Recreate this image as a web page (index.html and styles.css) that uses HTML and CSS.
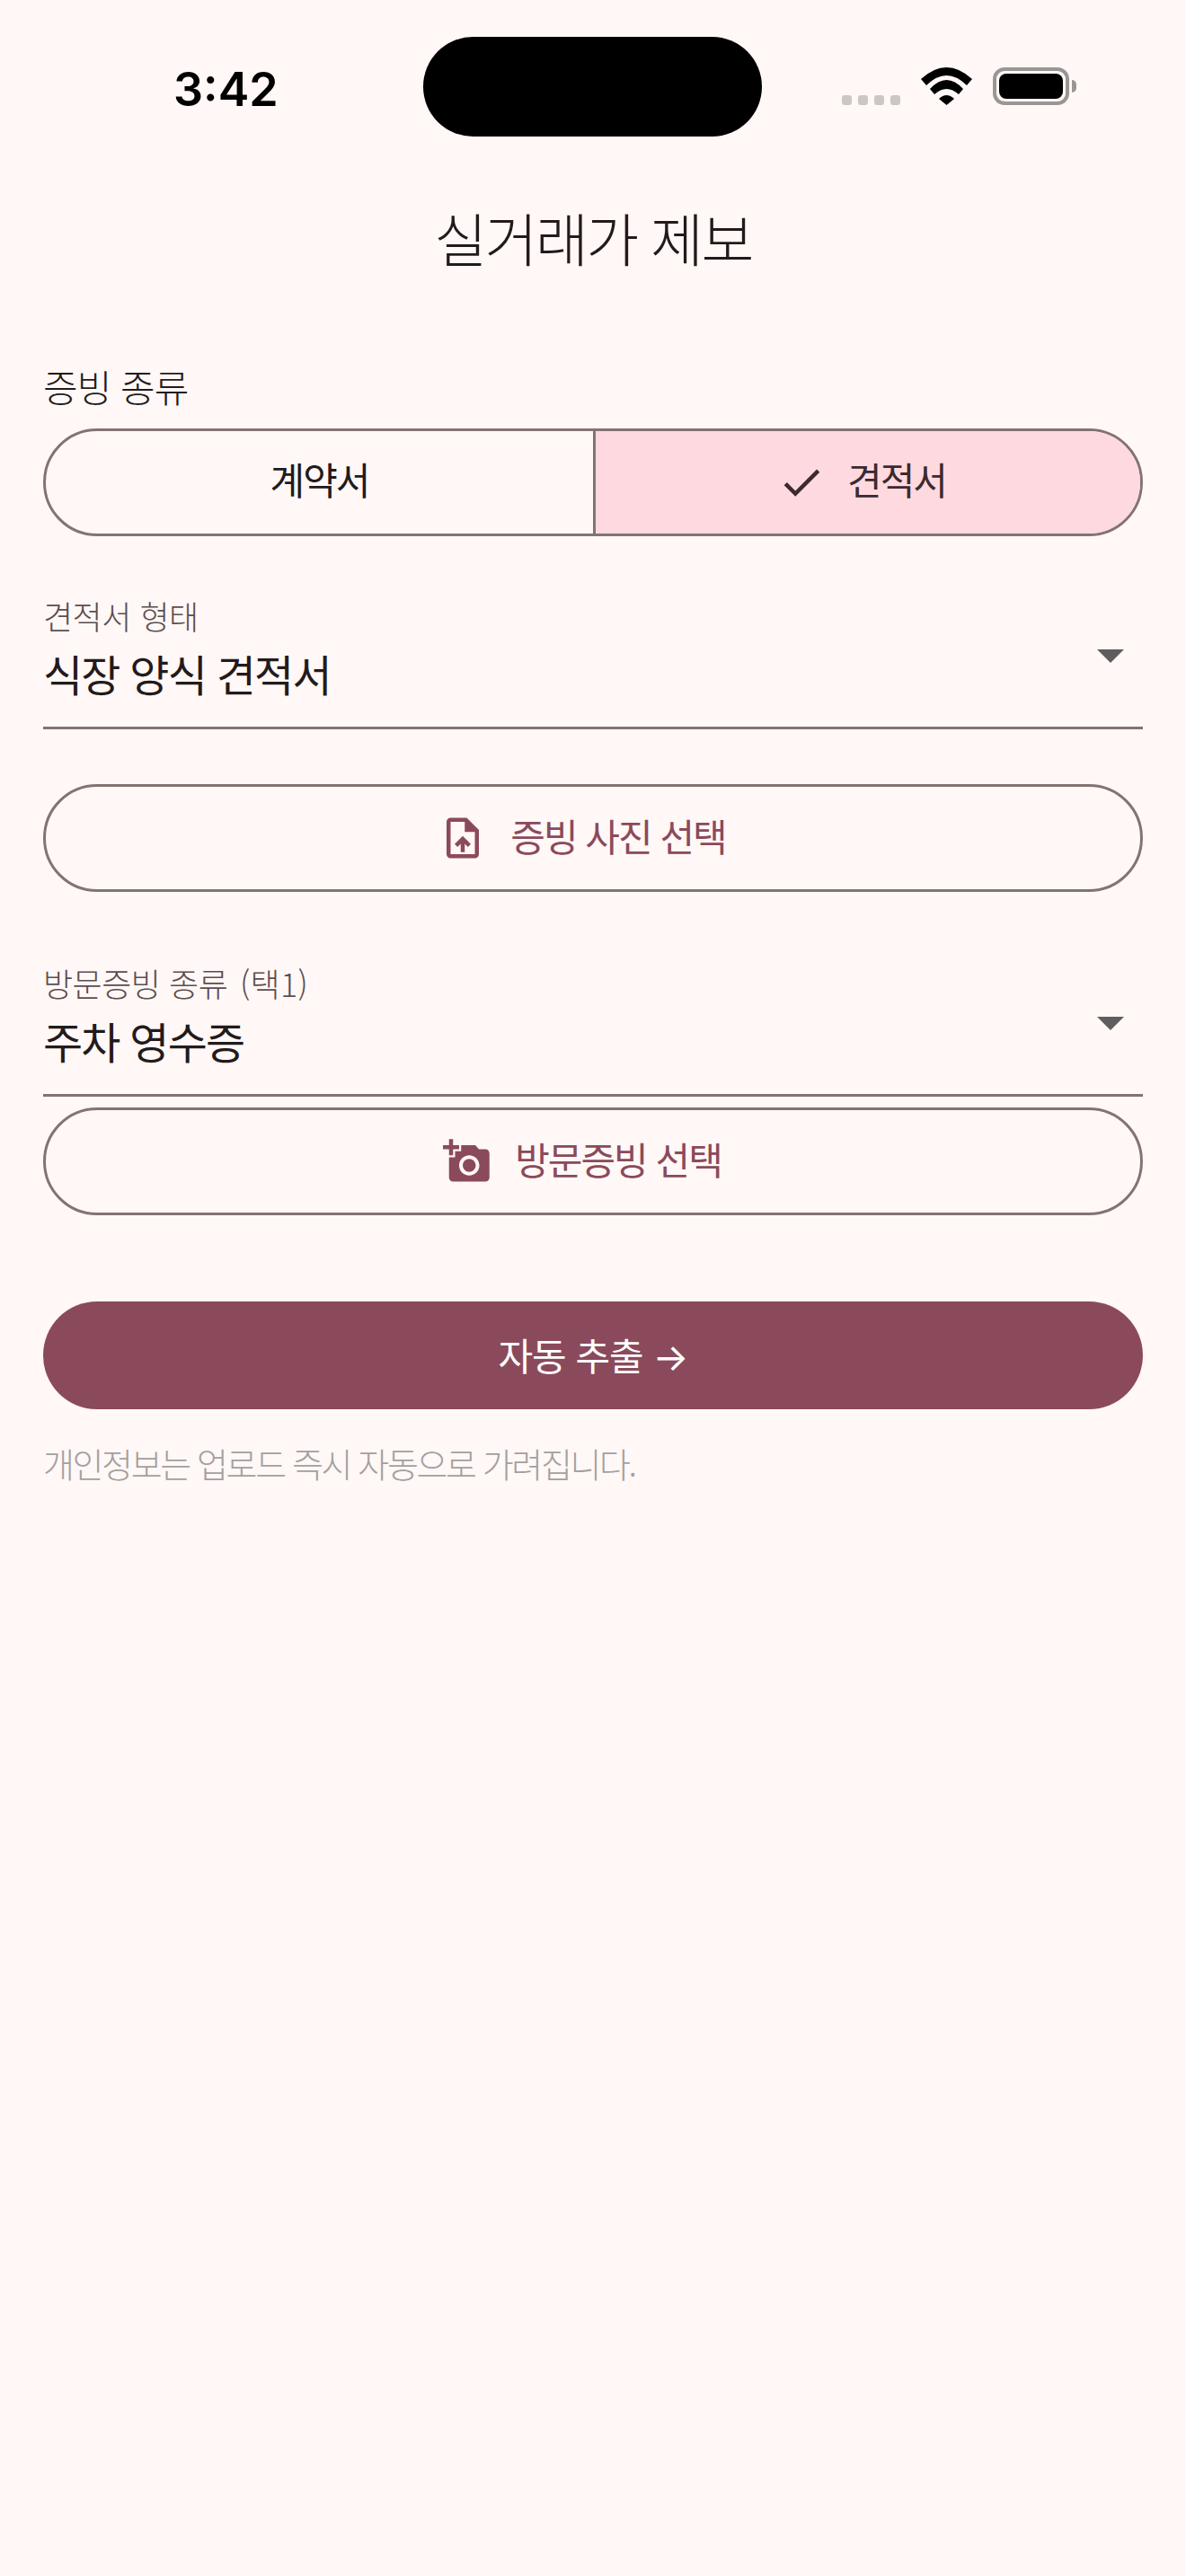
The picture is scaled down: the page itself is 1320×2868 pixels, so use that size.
FILE: index.html
```html
<!DOCTYPE html>
<html lang="ko">
<head>
<meta charset="utf-8">
<title>실거래가 제보</title>
<link rel="stylesheet" href="styles.css">
</head>
<body>
<div class="status-bar">
  <span class="time">3:42</span>
  <div class="island"></div>
  <div class="status-icons">
    <div class="signal"><i></i><i></i><i></i><i></i></div>
    <svg class="wifi" viewBox="0 0 57 42"><path d="M0 13Q28.5-13 57 13L51 20Q28.5-2 6 20Z"/><path d="M10 24Q28.5 4 47 24L42 30Q28.5 18 15 30Z"/><path d="M20 35Q28.5 27 37 35L28.5 42Z"/></svg>
    <div class="battery"><div class="battery-fill"></div></div>
    <div class="battery-nub"></div>
  </div>
</div>
<main class="page">
  <h1 class="title">실거래가 제보</h1>
  <div class="section-label">증빙 종류</div>
  <div class="segmented">
    <div class="segment"><span class="lift">계약서</span></div>
    <div class="segment selected">
      <svg class="icon check" viewBox="0 0 24 24"><path d="M9 16.17L4.83 12l-1.42 1.41L9 19 21 7l-1.41-1.41z"/></svg>
      <span class="lift">견적서</span>
    </div>
  </div>
  <div class="field first-field">
    <div class="field-label">견적서 형태</div>
    <div class="field-value">식장 양식 견적서</div>
    <div class="caret"></div>
  </div>
  <button class="outline-btn upload-btn">
    <svg class="icon" viewBox="0 0 24 24"><path d="M14 2H6c-1.1 0-1.99.9-1.99 2L4 20c0 1.1.89 2 1.99 2H18c1.1 0 2-.9 2-2V8l-6-6zm4 18H6V4h7v5h5v11zM8 15.01l1.41 1.41L11 14.84V19h2v-4.16l1.59 1.59L16 15.01 12.01 11 8 15.01z"/></svg>
    <span class="lift">증빙 사진 선택</span>
  </button>
  <div class="field second-field">
    <div class="field-label">방문증빙 종류 <span class="paren">(택1)</span></div>
    <div class="field-value">주차 영수증</div>
    <div class="caret"></div>
  </div>
  <button class="outline-btn visit-btn">
    <svg class="icon" viewBox="0 0 24 24"><path d="M3 4V1h2v3h3v2H5v3H3V6H0V4h3zm3 6V7h3V4h7l1.83 2H21c1.1 0 2 .9 2 2v12c0 1.1-.9 2-2 2H5c-1.1 0-2-.9-2-2V10h3zm7 9c2.76 0 5-2.24 5-5s-2.24-5-5-5-5 2.24-5 5 2.24 5 5 5zm-3.2-5c0 1.77 1.43 3.2 3.2 3.2s3.2-1.43 3.2-3.2-1.43-3.2-3.2-3.2-3.2 1.43-3.2 3.2z"/></svg>
    <span class="lift">방문증빙 선택</span>
  </button>
  <button class="filled-btn"><span class="lift">자동 추출 <span class="arrow">→</span></span></button>
  <p class="hint">개인정보는 업로드 즉시 자동으로 가려집니다.</p>
</main>
</body>
</html>
```
FILE: styles.css
```css
* { box-sizing: border-box; }
html, body { margin: 0; padding: 0; }
body {
  width: 1320px;
  height: 2868px;
  background: #fff8f6;
  color: #231a1c;
  font-family: "Noto Sans CJK KR", "Noto Sans", sans-serif;
  overflow: hidden;
}
.status-bar {
  height: 200px;
  display: flex;
  align-items: flex-start;
  padding: 41px 0 0 193px;
}
.time {
  width: 278px;
  margin-top: 25px;
  font: 600 52px/68px Inter, sans-serif;
  color: #000;
}
.island {
  width: 377px;
  height: 111px;
  background: #000;
  border-radius: 56px;
}
.status-icons {
  margin: 34px 0 0 89px;
  display: flex;
  align-items: flex-start;
}
.signal {
  display: flex;
  gap: 7px;
  margin-top: 31px;
  width: 88px;
}
.signal i {
  width: 11px;
  height: 11px;
  border-radius: 3px;
  background: #ccc7c6;
}
.wifi { width: 57px; height: 42px; fill: #000; }
.battery {
  width: 85px;
  height: 42px;
  margin-left: 23px;
  border: 4px solid #9b9594;
  border-radius: 13px;
  padding: 3px;
}
.battery-fill { width: 100%; height: 100%; background: #000; border-radius: 8px; }
.battery-nub {
  width: 5px;
  height: 14px;
  margin: 14px 0 0 3px;
  background: #9b9594;
  border-radius: 0 5px 5px 0;
}
.page {
  padding: 0 48px;
  display: flex;
  flex-direction: column;
}
.title {
  margin: 27px 0 0;
  font-size: 64px;
  line-height: 72px;
  font-weight: 300;
  letter-spacing: -2.5px;
  text-align: center;
}
.section-label {
  margin-top: 101px;
  font-size: 42px;
  line-height: 60px;
  letter-spacing: -1px;
  font-weight: 300;
}
.segmented {
  margin-top: 17px;
  height: 120px;
  display: flex;
  border: 3px solid #837371;
  border-radius: 60px;
  overflow: hidden;
}
.segment {
  flex: 0 0 50%;
  display: flex;
  align-items: center;
  justify-content: center;
  gap: 24px;
  font-size: 42px;
  letter-spacing: -2px;
}
.segment.selected {
  background: #ffd9e0;
  border-left: 3px solid #837371;
  color: #3b2a2e;
  padding-right: 14px;
}
.segment .lift { margin-bottom: 10px; }
.lift { margin-bottom: 8px; }
.icon { width: 54px; height: 54px; fill: currentColor; flex: none; }
.field {
  position: relative;
  height: 152px;
  border-bottom: 3px solid #837371;
}
.first-field { margin-top: 63px; }
.second-field { margin-top: 76px; }
.field-label {
  font-size: 36px;
  line-height: 50px;
  letter-spacing: -0.5px;
  color: #5c4d50;
  font-weight: 300;
}
.paren { margin-left: 4px; letter-spacing: 0.3px; }
.field-value {
  margin-top: 7px;
  font-size: 48px;
  line-height: 64px;
  letter-spacing: -1.8px;
  color: #231a1c;
}
.caret {
  position: absolute;
  right: 21px;
  top: 63px;
  width: 0;
  height: 0;
  border-left: 15px solid transparent;
  border-right: 15px solid transparent;
  border-top: 15px solid #605d5e;
}
.outline-btn {
  height: 120px;
  display: flex;
  align-items: center;
  justify-content: center;
  gap: 26px;
  background: none;
  border: 3px solid #837371;
  border-radius: 60px;
  color: #8b4a5b;
  font: inherit;
  font-size: 42px;
  letter-spacing: -2px;
  padding: 0 24px 0 0;
}
.upload-btn { margin-top: 61px; }
.visit-btn { margin-top: 12px; }
.filled-btn {
  margin-top: 96px;
  height: 120px;
  background: #8b4a5b;
  border: 0;
  border-radius: 60px;
  color: #fff;
  font: inherit;
  font-size: 42px;
  letter-spacing: -1px;
  padding: 0 0 4px;
}
.arrow { font-family: Inter, sans-serif; }
.hint {
  margin: 32px 0 0;
  font-size: 38px;
  line-height: 56px;
  letter-spacing: -2.4px;
  font-weight: 300;
  color: #a3a0a0;
}
```
